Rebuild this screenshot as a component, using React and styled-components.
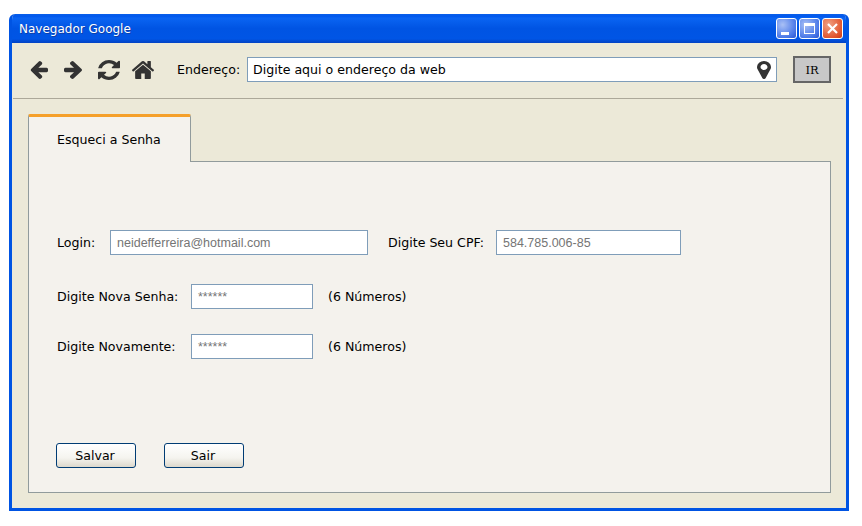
import React from "react";
import styled, { createGlobalStyle } from "styled-components";

const GlobalStyle = createGlobalStyle`
  html, body {
    margin: 0;
    padding: 0;
    background: #fff;
    font-family: "DejaVu Sans", Verdana, sans-serif;
  }
`;

const Page = styled.div`
  padding: 14px 0 0 9px;
  width: 862px;
  height: 526px;
  box-sizing: border-box;
`;

const Window = styled.div`
  width: 840px;
  height: 497px;
  box-sizing: border-box;
  display: flex;
  flex-direction: column;
  background: #ece9d8;
  border: 3px solid #0054e3;
  border-top: none;
  border-radius: 6px 6px 0 0;
  overflow: hidden;
`;

const TitleBar = styled.div`
  height: 29px;
  flex: none;
  margin: 0 -3px;
  padding: 0 6px 0 10px;
  display: flex;
  align-items: center;
  justify-content: space-between;
  background: linear-gradient(180deg, #0a5fe8 0%, #0058ee 8%, #0a64f2 14%, #0054e3 50%, #0055e5 85%, #0343c4 100%);
`;

const TitleText = styled.span`
  font-size: 12px;
  color: #fff;
  text-shadow: 1px 1px 0 #0f3fa6;
`;

const WindowButtons = styled.div`
  display: flex;
  gap: 2px;
`;

const WindowButton = styled.div`
  width: 21px;
  height: 21px;
  box-sizing: border-box;
  border: 1px solid #fff;
  border-radius: 3px;
  background: ${(p) =>
    p.$close
      ? "radial-gradient(circle at 30% 30%, #f0a184, #e2562f 70%, #c93a15)"
      : "radial-gradient(circle at 30% 30%, #a9c0f5, #4a78e8 70%, #2a55d0)"};
  display: flex;
  align-items: center;
  justify-content: center;
`;

const Toolbar = styled.div`
  height: 56px;
  flex: none;
  box-sizing: border-box;
  margin: 0 3px 0 1px;
  padding: 0 12px 2px 17px;
  display: flex;
  align-items: center;
  border-bottom: 1px solid #aca899;
`;

const NavIcons = styled.div`
  display: flex;
  align-items: center;
  color: #333;
  width: 147px;
  svg {
    display: block;
    fill: #333;
  }
`;

const NavIcon = styled.svg`
  margin-left: ${(p) => p.$gap || 0}px;
`;

const ToolbarLabel = styled.span`
  width: 70px;
  flex: none;
  font-size: 12.6px;
  color: #000;
`;

const AddressBox = styled.div`
  width: 530px;
  height: 25px;
  box-sizing: border-box;
  background: #fff;
  border: 1px solid #7f9db9;
  display: flex;
  align-items: center;
  justify-content: space-between;
  padding: 0 5px;
  font-size: 12.6px;
  color: #000;
`;

const PinIcon = styled.svg`
  fill: #333;
  display: block;
`;

const GoButton = styled.div`
  width: 38px;
  height: 27px;
  box-sizing: border-box;
  margin-left: 16px;
  background: #c8c8c8;
  border: 2px solid #666;
  display: flex;
  align-items: center;
  justify-content: center;
  font-family: "DejaVu Serif", serif;
  font-size: 11.5px;
  color: #000;
`;

const Content = styled.div`
  flex: 1;
  padding: 15px 15px 15px 16px;
  display: flex;
  flex-direction: column;
`;

const TabRow = styled.div`
  display: flex;
  height: 48px;
  flex: none;
  margin-bottom: -1px;
`;

const Tab = styled.div`
  width: 163px;
  box-sizing: border-box;
  background: #f4f2ed;
  border: 1px solid #919b9c;
  border-top: 3px solid #f5a02a;
  border-bottom: none;
  border-radius: 2px 2px 0 0;
  padding: 15px 0 0 28px;
  font-size: 12.6px;
  color: #000;
  position: relative;
  z-index: 1;
`;

const Panel = styled.div`
  flex: 1;
  box-sizing: border-box;
  background: #f4f2ed;
  border: 1px solid #919b9c;
  padding: 68px 0 24px 28px;
  display: flex;
  flex-direction: column;
`;

const FormRow = styled.div`
  display: flex;
  align-items: center;
  height: 25px;
  margin-bottom: ${(p) => p.$gap || 0}px;
`;

const Label = styled.span`
  font-size: 12.6px;
  color: #000;
  width: ${(p) => p.$width}px;
  flex: none;
`;

const Field = styled.div`
  width: ${(p) => p.$width}px;
  height: 25px;
  flex: none;
  box-sizing: border-box;
  background: #fff;
  border: 1px solid #7f9db9;
  padding: 0 6px;
  display: flex;
  align-items: center;
  font-family: "Liberation Sans", Arial, sans-serif;
  font-size: 12.5px;
  color: #757575;
  margin-right: ${(p) => p.$after || 0}px;
`;

const Hint = styled.span`
  font-size: 12.6px;
  color: #000;
`;

const ButtonRow = styled.div`
  display: flex;
  gap: 28px;
  margin-top: auto;
  margin-left: -1px;
`;

const Button = styled.div`
  width: 80px;
  height: 25px;
  box-sizing: border-box;
  border: 1px solid #003c74;
  border-radius: 3px;
  background: linear-gradient(180deg, #fff 0%, #f5f4ef 60%, #dcd8cc 100%);
  display: flex;
  align-items: center;
  justify-content: center;
  padding-right: 2px;
  font-size: 12.6px;
  color: #000;
`;

const App = () => (
  <Page>
    <GlobalStyle />
    <Window>
      <TitleBar>
        <TitleText>Navegador Google</TitleText>
        <WindowButtons>
          <WindowButton>
            <svg width="19" height="19" viewBox="0 0 19 19"><rect x="4" y="13" width="8" height="3" fill="#fff" /></svg>
          </WindowButton>
          <WindowButton>
            <svg width="19" height="19" viewBox="0 0 19 19"><rect x="4.5" y="4.5" width="10" height="10" fill="none" stroke="#fff" /><rect x="4" y="4" width="11" height="3" fill="#fff" /></svg>
          </WindowButton>
          <WindowButton $close>
            <svg width="19" height="19" viewBox="0 0 19 19"><path d="M5 5l9 9M14 5l-9 9" stroke="#fff" strokeWidth="2.2" /></svg>
          </WindowButton>
        </WindowButtons>
      </TitleBar>
      <Toolbar>
        <NavIcons>
          <NavIcon width="18" height="18" viewBox="128 181 1536 1558" preserveAspectRatio="none">
            <path d="M1664 896v128q0 53-32.5 90.5t-84.5 37.5h-704l293 294q38 36 38 90t-38 90l-75 76q-38 38-90 38-53 0-91-38l-651-652q-37-37-37-90 0-52 37-91l651-650q38-38 91-38 52 0 90 38l75 74q38 38 38 91t-38 91l-293 293h704q52 0 84.5 37.5t32.5 90.5z" />
          </NavIcon>
          <NavIcon $gap={16} width="18" height="18" viewBox="128 181 1472 1558" preserveAspectRatio="none">
            <path d="M1600 960q0 54-37 91l-651 651q-39 37-91 37-51 0-90-37l-75-75q-38-38-38-91t38-91l293-293h-704q-52 0-84.5-37.5t-32.5-90.5v-128q0-53 32.5-90.5t84.5-37.5h704l-293-294q-38-36-38-90t38-90l75-75q38-38 90-38 53 0 91 38l651 651q37 35 37 90z" />
          </NavIcon>
          <NavIcon $gap={16} width="22" height="20" viewBox="128 128 1536 1536" preserveAspectRatio="none">
            <path d="M1639 1056q0 5-1 7-64 268-268 434.5t-478 166.5q-146 0-282.5-55t-243.5-157l-129 129q-19 19-45 19t-45-19-19-45v-448q0-26 19-45t45-19h448q26 0 45 19t19 45-19 45l-137 137q71 66 161 102t187 36q134 0 250-65t186-179q11-17 53-117 8-23 30-23h192q13 0 22.5 9.5t9.5 22.5zm25-800v448q0 26-19 45t-45 19h-448q-26 0-45-19t-19-45 19-45l138-138q-148-137-349-137-134 0-250 65t-186 179q-11 17-53 117-8 23-30 23h-199q-13 0-22.5-9.5t-9.5-22.5v-7q65-268 270-434.5t480-166.5q146 0 284 55.5t245 156.5l130-129q19-19 45-19t45 19 19 45z" />
          </NavIcon>
          <NavIcon $gap={12} width="22" height="18" viewBox="90 253 1612 1283" preserveAspectRatio="none">
            <path d="M1472 992v480q0 26-19 45t-45 19h-384v-384h-256v384h-384q-26 0-45-19t-19-45v-480q0-1 .5-3t.5-3l575-474 575 474q1 2 1 6zm223-69l-62 74q-8 9-21 11h-3q-13 0-21-7l-692-577-692 577q-12 8-24 7-13-2-21-11l-62-74q-8-10-7-23.5t11-21.5l719-599q32-26 76-26t76 26l244 204v-195q0-14 9-23t23-9h192q14 0 23 9t9 23v408l219 182q10 8 11 21.5t-7 23.5z" />
          </NavIcon>
        </NavIcons>
        <ToolbarLabel>Endereço:</ToolbarLabel>
        <AddressBox>
          Digite aqui o endereço da web
          <PinIcon width="14" height="18" viewBox="384 128 1024 1536" preserveAspectRatio="none">
            <path d="M1152 640q0-106-75-181t-181-75-181 75-75 181 75 181 181 75 181-75 75-181zm256 0q0 109-33 179l-364 774q-16 33-47.5 52t-67.5 19-67.5-19-46.5-52l-365-774q-33-70-33-179 0-212 150-362t362-150 362 150 150 362z" />
          </PinIcon>
        </AddressBox>
        <GoButton>IR</GoButton>
      </Toolbar>
      <Content>
        <TabRow>
          <Tab>Esqueci a Senha</Tab>
        </TabRow>
        <Panel>
          <FormRow $gap={29}>
            <Label $width={53}>Login:</Label>
            <Field $width={258} $after={20}>neidefferreira@hotmail.com</Field>
            <Label $width={108}>Digite Seu CPF:</Label>
            <Field $width={185}>584.785.006-85</Field>
          </FormRow>
          <FormRow $gap={25}>
            <Label $width={134}>Digite Nova Senha:</Label>
            <Field $width={122} $after={15}>******</Field>
            <Hint>(6 Números)</Hint>
          </FormRow>
          <FormRow>
            <Label $width={134}>Digite Novamente:</Label>
            <Field $width={122} $after={15}>******</Field>
            <Hint>(6 Números)</Hint>
          </FormRow>
          <ButtonRow>
            <Button>Salvar</Button>
            <Button>Sair</Button>
          </ButtonRow>
        </Panel>
      </Content>
    </Window>
  </Page>
);

export default App;
